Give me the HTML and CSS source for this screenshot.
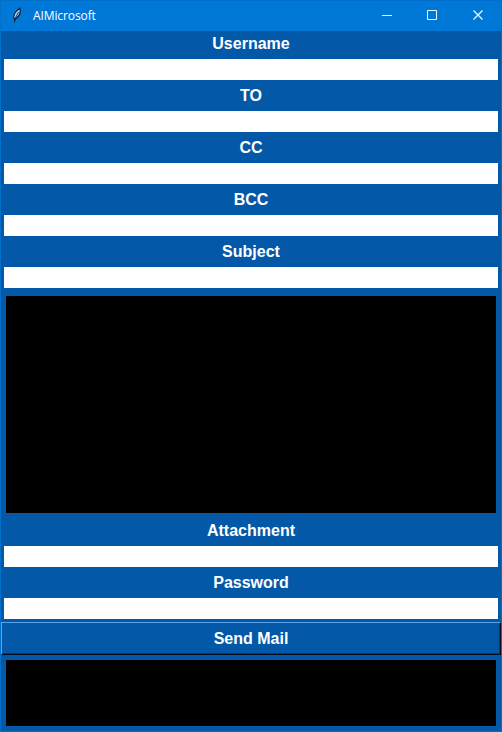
FILE: index.html
```html
<!DOCTYPE html>
<html lang="en">
<head>
<meta charset="utf-8">
<title>AIMicrosoft</title>
<link rel="stylesheet" href="styles.css">
</head>
<body>
<div class="window">
  <header class="titlebar">
    <svg class="feather" width="16" height="16" viewBox="0 0 16 16" aria-hidden="true">
      <path d="M5.500 12.500C3.800 9.500 5.500 5 10.800 1.200C12.300 4.500 10.500 9.500 6.500 12Z" fill="#a9d8fb" stroke="#071a38" stroke-width="1.300"/>
      <path d="M5.500 15.500L6.200 11.500L9.500 5" fill="none" stroke="#071a38" stroke-width="0.900"/>
    </svg>
    <span class="title">AIMicrosoft</span>
    <div class="controls">
      <svg width="46" height="30" viewBox="0 0 46 30"><path d="M18 15.500h10" stroke="#e4fbff"/></svg>
      <svg width="45" height="30" viewBox="0 0 45 30"><path d="M17.500 10.500h9v9h-9z" fill="none" stroke="#e4fbff"/></svg>
      <svg width="46" height="30" viewBox="0 0 46 30"><path d="M18.500 10.500l9 9m0-9l-9 9" stroke="#e4fbff" stroke-width="1.300"/></svg>
    </div>
  </header>
  <main class="form">
    <label class="field"><span class="label">Username</span><input class="entry" type="text"></label>
    <label class="field"><span class="label">TO</span><input class="entry" type="text"></label>
    <label class="field"><span class="label">CC</span><input class="entry" type="text"></label>
    <label class="field"><span class="label">BCC</span><input class="entry" type="text"></label>
    <label class="field"><span class="label">Subject</span><input class="entry" type="text"></label>
    <textarea class="text message" aria-label="Message"></textarea>
    <label class="field"><span class="label">Attachment</span><input class="entry" type="text"></label>
    <label class="field"><span class="label">Password</span><input class="entry" type="password"></label>
    <button class="send" type="button">Send Mail</button>
    <textarea class="text output" aria-label="Output"></textarea>
  </main>
</div>
</body>
</html>
```
FILE: styles.css
```css
* { box-sizing: border-box; }
body { margin: 0; }
.window {
  width: 502px;
  height: 732px;
  border: 1px solid #0070cb;
  background: #0358a8;
  color: #fff;
  font: bold 16px "Liberation Sans", Arial, sans-serif;
}
.titlebar {
  display: flex;
  align-items: center;
  height: 30px;
  background: #0078d7;
}
.feather { margin: 0 8px 2px 8px; }
.title {
  font: 12px "Open Sans", sans-serif;
  line-height: 30px;
  letter-spacing: -0.1px;
  height: 30px;
}
.controls { display: flex; height: 30px; margin-left: auto; margin-top: -2px; }
.controls svg { display: block; }
.form { display: flex; flex-direction: column; }
.field { display: flex; flex-direction: column; height: 52px; padding: 0 3px; }
.label { height: 28px; line-height: 26px; text-align: center; }
.entry {
  width: 100%;
  height: 21px;
  padding: 0 2px;
  border: 0;
  background: #fff;
}
.text {
  display: block;
  margin: 5px;
  padding: 0;
  border: 0;
  resize: none;
  background: #000;
  color: #fff;
}
.message { height: 217px; }
.output { height: 66px; }
.send {
  height: 33px;
  padding: 0;
  border: 1px solid;
  border-color: #5ba2e8 #020a1c #020a1c #5ba2e8;
  box-shadow: inset -1px -1px #023a72;
  background: #0358a8;
  color: #fff;
  font: inherit;
}
```
